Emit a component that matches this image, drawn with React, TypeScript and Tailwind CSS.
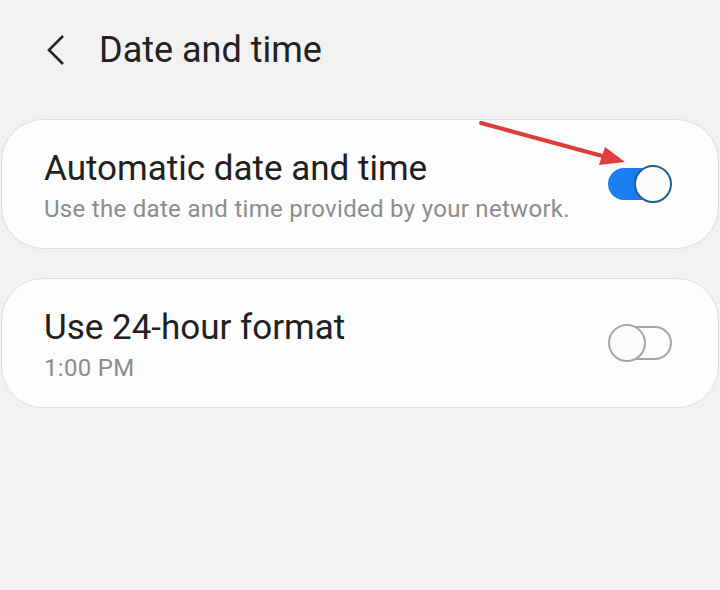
import React from "react";

function Toggle({ on }: { on: boolean }) {
  if (on) {
    return (
      <div className="relative h-[38px] w-[64px] shrink-0">
        <div className="absolute left-0 top-[3px] h-[32px] w-[60px] rounded-full bg-[#1a7ef0]" />
        <div className="absolute right-0 top-0 h-[38px] w-[38px] rounded-full border-2 border-[#24608f] bg-[#fbfbfb]" />
      </div>
    );
  }
  return (
    <div className="relative h-[38px] w-[64px] shrink-0">
      <div className="absolute right-0 top-[2px] h-[34px] w-[60px] rounded-full border-2 border-[#a6a6a6]" />
      <div className="absolute left-0 top-0 h-[38px] w-[38px] rounded-full border-2 border-[#a6a6a6] bg-[#fbfbfb]" />
    </div>
  );
}

function SettingCard({ title, subtitle, on }: { title: string; subtitle: string; on: boolean }) {
  return (
    <div className="flex h-[130px] items-center justify-between rounded-[42px] border border-[#dedede] bg-[#fcfcfc] pl-[42px] pr-[46px]">
      <div className="flex flex-col pt-[4px]">
        <span className="text-[35px] leading-[40px] text-[#202020]">{title}</span>
        <span className="mt-[6px] text-[24px] leading-[28px] tracking-[0.3px] text-[#8c8c8c]">{subtitle}</span>
      </div>
      <Toggle on={on} />
    </div>
  );
}

export default function App() {
  return (
    <div
      className="relative h-[590px] w-[720px] overflow-hidden bg-[#f2f2f2] px-[1px]"
      style={{ fontFamily: "Roboto, 'Noto Sans', sans-serif" }}
    >
      <div className="flex h-[100px] items-center pl-[44px]">
        <svg width="22" height="32" viewBox="0 0 22 32" className="text-[#252525]">
          <path d="M18 2 L4 16 L18 30" fill="none" stroke="currentColor" strokeWidth="2.6" />
        </svg>
        <h1 className="ml-[32px] text-[36px] leading-none text-[#222222]">Date and time</h1>
      </div>

      <div className="mt-[19px] flex flex-col gap-[29px]">
        <SettingCard title="Automatic date and time" subtitle="Use the date and time provided by your network." on />
        <SettingCard title="Use 24-hour format" subtitle="1:00 PM" on={false} />
      </div>

      <svg className="pointer-events-none absolute left-0 top-0" width="720" height="590">
        <line x1="481" y1="123" x2="606" y2="157" stroke="#e03c3c" strokeWidth="4" strokeLinecap="round" />
        <polygon points="625,162 599,165 605,147" fill="#e03c3c" />
      </svg>
    </div>
  );
}
